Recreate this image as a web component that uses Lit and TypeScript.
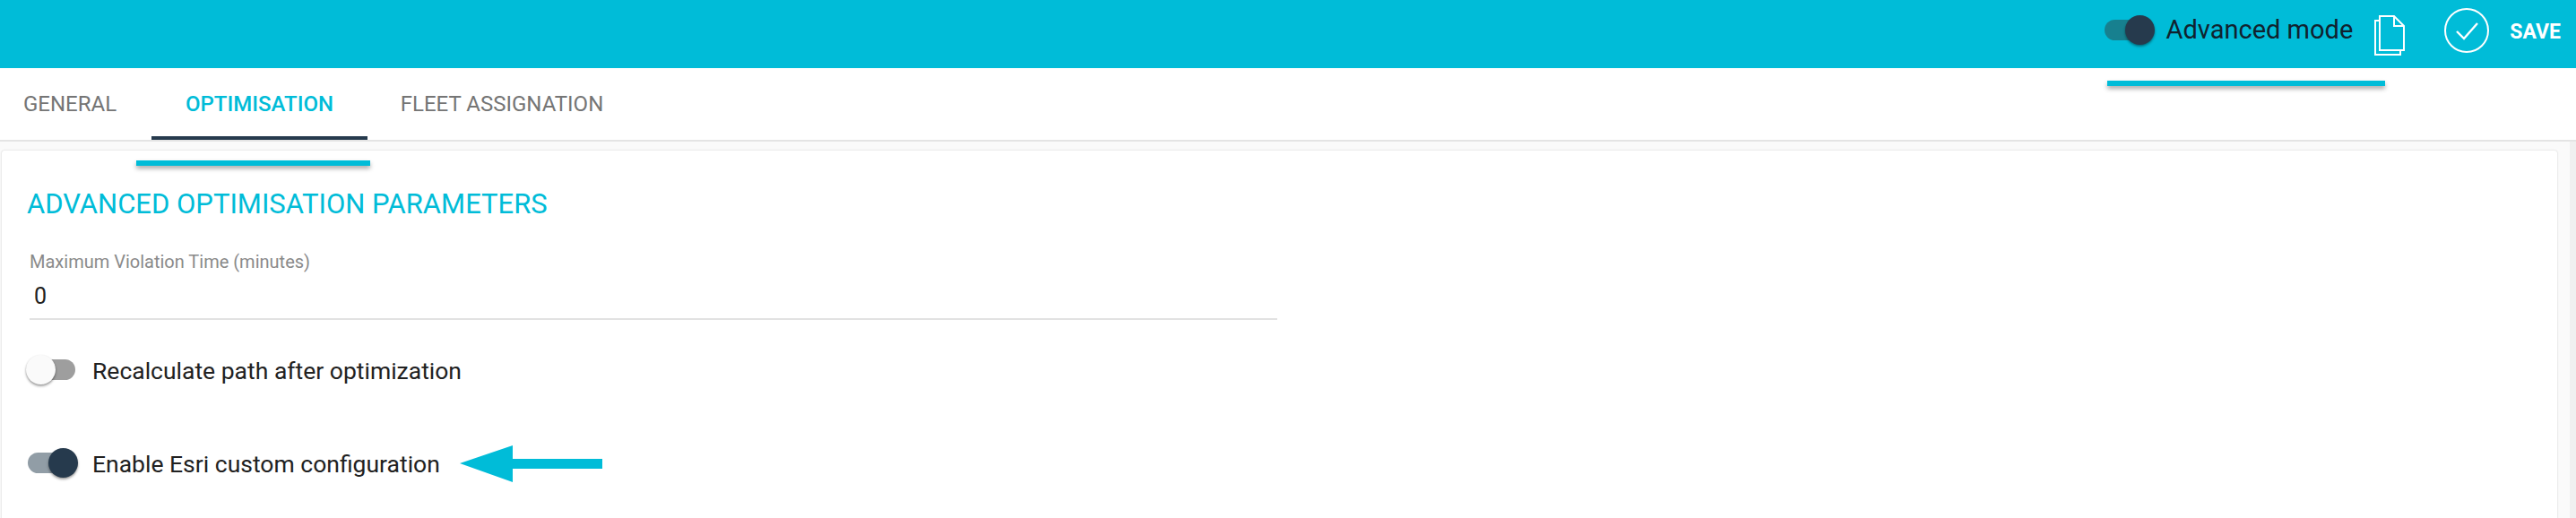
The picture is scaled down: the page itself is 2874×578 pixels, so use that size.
import { LitElement, html, css } from "lit";
import { customElement, property } from "lit/decorators.js";

@customElement("app-switch")
class AppSwitch extends LitElement {
  @property({ type: Boolean }) on = false;
  @property() track = "#9e9e9e";
  static styles = css`
    :host { display: block; width: 58px; height: 34px; position: relative; flex: none; }
    .track { position: absolute; left: 2px; right: 3px; top: 5px; height: 23px; border-radius: 12px; }
    .thumb { position: absolute; top: 0; width: 33px; height: 33px; border-radius: 50%;
      box-shadow: 0 2px 3px rgba(0,0,0,.3), 0 1px 2px rgba(0,0,0,.18); }
    .on { left: 25px; background: #263a4d; }
    .off { left: 0; background: #fafafa; }
  `;
  render() {
    return html`<div class="track" style="background:${this.track}"></div>
      <div class="thumb ${this.on ? "on" : "off"}"></div>`;
  }
}

@customElement("app-root")
class AppRoot extends LitElement {
  static styles = css`
    :host { display: block; position: relative; width: 2874px; height: 578px; overflow: hidden;
      background: #fafafa; font-family: Roboto, "Liberation Sans", sans-serif; color: #212121; }
    .bar { height: 76px; background: #00bcd8; display: flex; align-items: center; justify-content: flex-end;
      padding-right: 17px; box-sizing: border-box; }
    .mode { font-size: 29px; color: #10222e; margin-left: 13px; margin-top: -10px; white-space: nowrap; }
    .bar app-switch { margin-top: -8px; }
    .doc { margin-left: 23px; margin-top: 2px; }
    .check { margin-left: 43px; margin-top: -9px; }
    .save { margin-left: 23px; font-size: 23px; font-weight: 700; color: #fff; margin-top: -6px; }
    .tabs { height: 80px; background: #fff; display: flex; border-bottom: 2px solid #e4e4e4; box-sizing: content-box; }
    .tab { font-size: 24px; font-weight: 400; color: #757575; display: flex; align-items: center; justify-content: center;
      box-sizing: border-box; height: 80px; padding-top: 3px; border-bottom: 4px solid transparent; white-space: nowrap; }
    .t1 { width: 169px; padding-right: 13px; }
    .t2 { width: 241px; color: #00bcd8; border-bottom-color: #263a4d; font-weight: 500; }
    .t3 { width: 300px; }
    .content { display: flex; height: 420px; }
    .main { flex: 1; padding: 10px 14px 0 2px; min-width: 0; }
    .scroll { width: 7px; background: #f0f0f0; }
    .panel { background: #fff; height: 420px; border-radius: 3px; box-shadow: 0 0 2px rgba(0,0,0,.22); padding-left: 28px; box-sizing: border-box; padding-top: 44px; }
    h2 { margin: 0; font-size: 31px; font-weight: 400; color: #00bcd8; line-height: 32px; white-space: nowrap; }
    .field { width: 1392px; margin-top: 36px; margin-left: 3px; border-bottom: 2px solid #e2e2e2; height: 75px; }
    .lab { font-size: 20px; color: #8a8a8a; line-height: 24px; white-space: nowrap; }
    .val { font-size: 25px; color: #212121; line-height: 30px; margin-top: 12px; padding-left: 5px; }
    .row { display: flex; align-items: center; gap: 16px; margin-left: -1px; font-size: 26.5px; color: #212121; white-space: nowrap; }
    .r1 { margin-top: 39px; }
    .r2 { margin-top: 70px; }
    .line { position: absolute; height: 6px; background: #00bcd8; box-shadow: 0 3px 5px rgba(0,0,0,.35); }
    .l1 { left: 2351px; top: 90px; width: 310px; }
    .l2 { left: 152px; top: 179px; width: 261px; }
    .arrow { position: absolute; left: 513px; top: 496px; }
  `;
  render() {
    return html`
      <div class="bar">
        <app-switch on track="#17808f"></app-switch>
        <span class="mode">Advanced mode</span>
        <svg class="doc" width="36" height="46" viewBox="0 0 36 46" fill="none" stroke="#fff" stroke-width="2">
          <path d="M7 2h16l11 11v27H7z"/><path d="M23 2v11h11"/><path d="M7 7H2v38h28v-5"/>
        </svg>
        <svg class="check" width="50" height="50" viewBox="0 0 50 50" fill="none" stroke="#fff" stroke-width="2">
          <circle cx="25" cy="25" r="24"/><path d="M14 26l8 8 15-17" stroke-width="2.4"/>
        </svg>
        <span class="save">SAVE</span>
      </div>
      <div class="tabs">
        <div class="tab t1">GENERAL</div>
        <div class="tab t2">OPTIMISATION</div>
        <div class="tab t3">FLEET ASSIGNATION</div>
      </div>
      <div class="content">
        <div class="main">
          <div class="panel">
            <h2>ADVANCED OPTIMISATION PARAMETERS</h2>
            <div class="field">
              <div class="lab">Maximum Violation Time (minutes)</div>
              <div class="val">0</div>
            </div>
            <div class="row r1"><app-switch track="#9e9e9e"></app-switch><span>Recalculate path after optimization</span></div>
            <div class="row r2"><app-switch on track="#919da6"></app-switch><span>Enable Esri custom configuration</span></div>
          </div>
        </div>
        <div class="scroll"></div>
      </div>
      <div class="line l1"></div>
      <div class="line l2"></div>
      <svg class="arrow" width="160" height="42" viewBox="0 0 160 42">
        <path d="M0 21L59 1v15h100v11H59v15z" fill="#00bcd8"/>
      </svg>
    `;
  }
}
